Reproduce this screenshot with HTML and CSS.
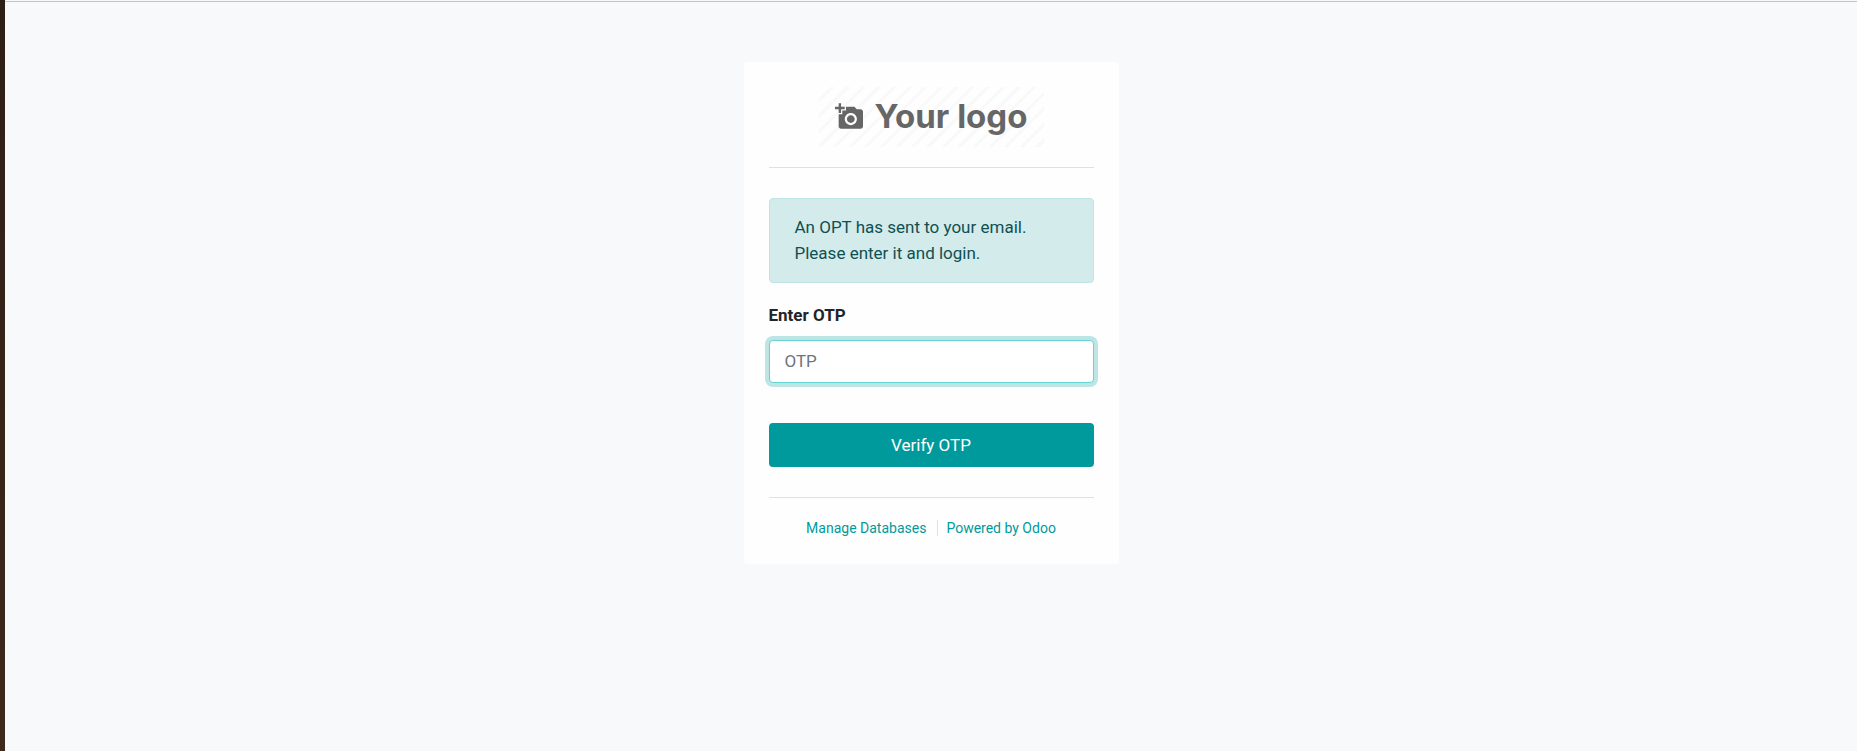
FILE: index.html
```html
<!DOCTYPE html>
<html lang="en">
<head>
<meta charset="utf-8">
<meta name="viewport" content="width=device-width, initial-scale=1">
<title>Verify OTP</title>
<link rel="stylesheet" href="styles.css">
</head>
<body class="page">
<main class="content">
  <section class="card">
    <header class="brand">
      <div class="logo">
        <svg class="logo-icon" viewBox="0 1 23 21" aria-hidden="true"><path fill="currentColor" d="M3 4V1h2v3h3v2H5v3H3V6H0V4h3zm3 6V7h3V4h7l1.83 2H21c1.1 0 2 .9 2 2v12c0 1.1-.9 2-2 2H5c-1.1 0-2-.9-2-2V10h3zm7 9c2.76 0 5-2.24 5-5s-2.24-5-5-5-5 2.24-5 5 2.24 5 5 5zm-3.2-5c0 1.77 1.43 3.2 3.2 3.2s3.2-1.43 3.2-3.2-1.43-3.2-3.2-3.2-3.2 1.43-3.2 3.2z"/></svg>
        <span class="logo-text">Your logo</span>
      </div>
    </header>
    <form class="form">
      <p class="alert" role="status">An OPT has sent to your email. Please enter it and login.</p>
      <label class="label" for="otp">Enter OTP</label>
      <input class="input" id="otp" name="otp" type="text" placeholder="OTP">
      <button class="button" type="submit">Verify OTP</button>
    </form>
    <footer class="links">
      <a class="link" href="#databases">Manage Databases</a>
      <a class="link link-divided" href="#odoo">Powered by Odoo</a>
    </footer>
  </section>
</main>
</body>
</html>
```
FILE: styles.css
```css
* { box-sizing: border-box; }

.page {
  margin: 0;
  min-height: 100vh;
  display: flex;
  background: linear-gradient(#2e1f15, #3e291c) left / 5px 100% no-repeat #f8f9fb;
  padding-left: 5px;
  color: #212529;
  font: 17px/26px Roboto, sans-serif;
}

.content {
  flex: 1;
  padding: 62px 16px;
  background: linear-gradient(#c3c4c6, #c3c4c6) 0 1px / 100% 1px no-repeat;
}

.card {
  max-width: 375px;
  margin: 0 auto;
  padding: 25px 25px 28px;
  border-radius: 4px;
  background: #fefefe;
}

.brand {
  display: flex;
  justify-content: center;
  padding-bottom: 20px;
  border-bottom: 1px solid #dee2e6;
}

.logo {
  display: flex;
  align-items: center;
  justify-content: center;
  gap: 12px;
  width: 225px;
  height: 60px;
  padding-bottom: 2px;
  color: #666;
  background: repeating-linear-gradient(135deg, #fefefe 0 8px, #f9f9f9 8px 11px);
}

.logo-icon {
  width: 28px;
  height: 26px;
}

.logo-text {
  font: 700 33px/40px Inter, sans-serif;
}

.form {
  display: flex;
  flex-direction: column;
  padding: 30px 0;
  border-bottom: 1px solid #dee2e6;
}

.alert {
  margin: 0 0 19px;
  padding: 15px 25px 16px;
  border: 1px solid #bee5e5;
  border-radius: 4px;
  background: #d3ebeb;
  color: #0f5052;
}

.label {
  margin-bottom: 12px;
  font-weight: 700;
}

.input {
  width: 100%;
  height: 43px;
  padding: 0 15px 2px;
  border: 1px solid #68d3d5;
  border-radius: 4px;
  outline: 0;
  background: #fff;
  box-shadow: 0 0 0 4px #bde5e5;
  color: #495057;
  font: inherit;
}

.input::placeholder {
  color: #6c757d;
  opacity: 1;
}

.button {
  height: 44px;
  margin-top: 40px;
  padding: 0 16px;
  border: 0;
  border-radius: 4px;
  background: #009a9d;
  color: #fff;
  font: inherit;
}

.links {
  display: flex;
  justify-content: center;
  padding-top: 22px;
  font-size: 14px;
  line-height: 16px;
}

.link {
  color: #009a9d;
  text-decoration: none;
}

.link-divided {
  margin-left: 11px;
  padding-left: 8px;
  border-left: 1px solid #dee2e6;
}
```
